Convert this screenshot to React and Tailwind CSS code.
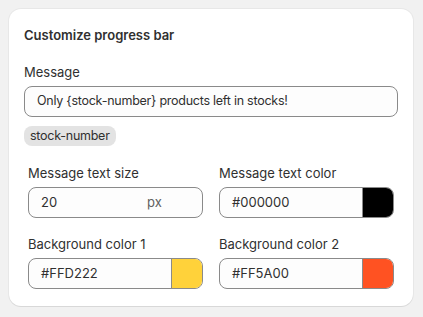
import React from "react";

const font = { fontFamily: "Inter, 'Noto Sans', sans-serif" };

function ColorField({ label, value, swatch }) {
  return (
    <div className="flex flex-col gap-1">
      <label className="text-[13px] leading-5 text-[#303030]">{label}</label>
      <div className="flex h-[31px] rounded-lg border border-[#8a8a8a] bg-[#fdfdfd] overflow-hidden">
        <span className="flex-1 flex items-center pl-3 text-[13px] text-[#303030]">{value}</span>
        <span className={`w-[31px] border-l border-[#8a8a8a] ${swatch}`} />
      </div>
    </div>
  );
}

export default function App() {
  return (
    <div className="min-h-screen bg-[#f1f1f1] p-[9px] pr-[10px]" style={font}>
      <div className="bg-white rounded-xl shadow-[0_1px_0_0_rgba(26,26,26,0.07),0_0_0_1px_rgba(0,0,0,0.04)] px-[15px] pt-4 pb-[17px] text-[#303030]">
        <h2 className="text-[13px] leading-5 font-semibold">Customize progress bar</h2>

        <div className="mt-[17px] flex flex-col gap-1">
          <label className="text-[13px] leading-5">Message</label>
          <div className="h-[31px] flex items-center rounded-lg border border-[#8a8a8a] bg-[#fdfdfd] px-3 text-[12.5px] tracking-[-0.25px]">
            Only {"{stock-number}"} products left in stocks!
          </div>
        </div>
        <div className="mt-[5px]">
          <span className="inline-flex h-5 items-center rounded-lg bg-[#e3e3e3] px-[6px] text-[12.5px] tracking-[-0.25px]">stock-number</span>
        </div>

        <div className="mt-[17px] px-1 grid grid-cols-2 gap-x-4 gap-y-4">
          <div className="flex flex-col gap-1">
            <label className="text-[13px] leading-5">Message text size</label>
            <div className="h-[31px] flex items-center rounded-lg border border-[#8a8a8a] bg-[#fdfdfd] pl-3 text-[13px]">
              <span className="w-[106px]">20</span>
              <span className="text-[#616161]">px</span>
            </div>
          </div>
          <ColorField label="Message text color" value="#000000" swatch="bg-black" />
          <ColorField label="Background color 1" value="#FFD222" swatch="bg-[#ffd23a]" />
          <ColorField label="Background color 2" value="#FF5A00" swatch="bg-[#ff5222]" />
        </div>
      </div>
    </div>
  );
}
